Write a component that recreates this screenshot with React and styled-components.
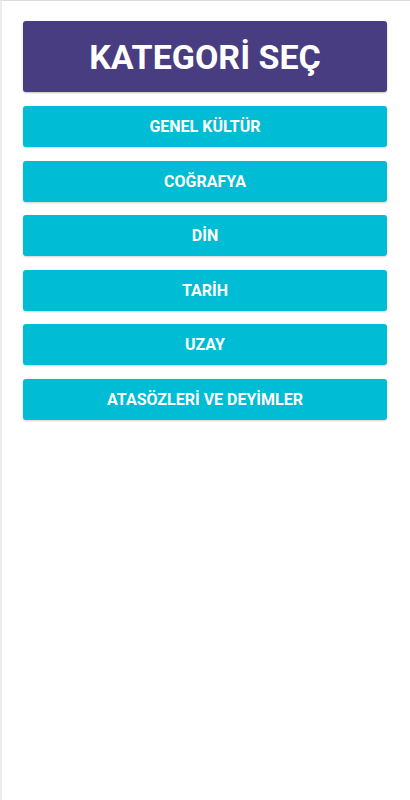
import React from 'react';
import styled, { createGlobalStyle } from 'styled-components';

const categories = [
	'GENEL KÜLTÜR',
	'COĞRAFYA',
	'DİN',
	'TARİH',
	'UZAY',
	'ATASÖZLERİ VE DEYİMLER',
];

const App = () => {
	return (
		<Screen>
			<GlobalStyle />
			<Title>KATEGORİ SEÇ</Title>
			<List>
				{categories.map((name) => (
					<CategoryButton key={name}>{name}</CategoryButton>
				))}
			</List>
		</Screen>
	);
};

export default App;

const GlobalStyle = createGlobalStyle`
	html, body {
		margin: 0;
		padding: 0;
		background: #ffffff;
		font-family: Roboto, "Noto Sans", sans-serif;
	}
`;

const Screen = styled.div`
	box-sizing: border-box;
	width: 410px;
	height: 800px;
	border-top: 1px solid #dcdcdc;
	border-left: 2px solid #ececec;
	padding: 20px 23px 0 21px;
	display: flex;
	flex-direction: column;
	gap: 14px;
`;

const Title = styled.div`
	height: 71px;
	display: flex;
	align-items: center;
	justify-content: center;
	background: #483d80;
	border-radius: 3px;
	box-shadow: 0 1px 2px rgba(0, 0, 0, 0.25);
	color: #ffffff;
	font-size: 34px;
	font-weight: 700;
`;

const List = styled.div`
	display: flex;
	flex-direction: column;
	gap: 13.6px;
`;

const CategoryButton = styled.button`
	height: 41px;
	border: none;
	border-radius: 3px;
	background: #00bcd4;
	box-shadow: 0 1px 2px rgba(0, 0, 0, 0.18);
	color: #ffffff;
	font-family: Roboto, "Noto Sans", sans-serif;
	font-size: 16px;
	font-weight: 700;
	padding: 0;
	cursor: pointer;
`;
